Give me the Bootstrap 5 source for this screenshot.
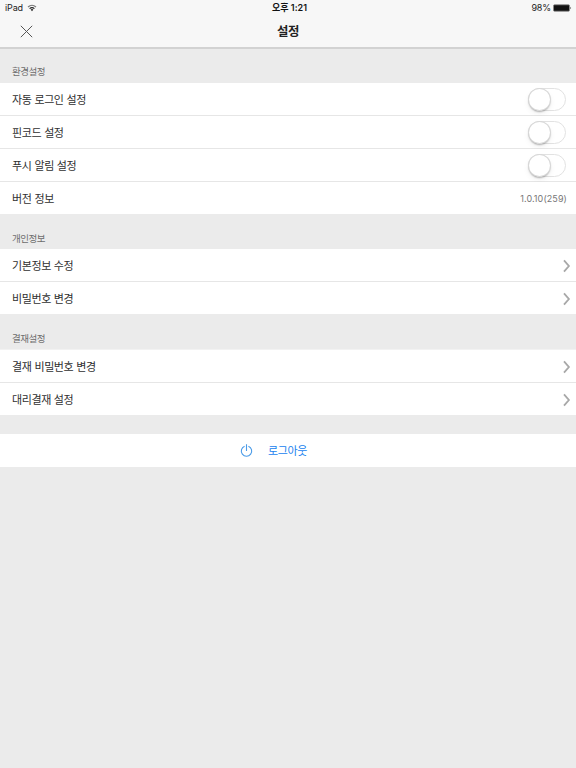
<!DOCTYPE html>
<html lang="ko">
<head>
<meta charset="utf-8">
<meta name="viewport" content="width=device-width, initial-scale=1">
<title>설정</title>
<link href="https://cdn.jsdelivr.net/npm/bootstrap@5.3.0/dist/css/bootstrap.min.css" rel="stylesheet">
<style>
body{background:#ebebeb;font-family:"Noto Sans CJK KR",sans-serif;font-size:11px;letter-spacing:-.4px;word-spacing:.3px;line-height:16px;color:#303030;min-height:100vh}
.top-area{height:49px;background:#f7f7f7;border-bottom:2px solid #d2d2d2}
.status{height:16px;padding:0 4px 0 5px;font-family:Inter,"Noto Sans CJK KR",sans-serif;font-size:9px;letter-spacing:-.15px;word-spacing:0;color:#222}
.status>div{flex:1 0 0}
.status>.clock{font-size:9px;letter-spacing:0;font-weight:600;color:#111;padding-left:2px}
.battery{margin-left:2px}
.title-row{height:31px;padding:0 20px}
.title-row>*{flex:1 0 0}
.page-title{font-size:12.4px;font-weight:700;letter-spacing:-.5px;color:#222;line-height:18px;padding-bottom:1px}
.section-name{height:35px;padding:0 12px 4px;font-size:9.5px;letter-spacing:-.45px;line-height:14px;color:#6d6d6d}
.first-name{height:34px;padding-bottom:5px}
.setting-list{--bs-list-group-border-radius:0}
.setting-list .list-group-item{height:33px;padding:0 5px 0 12px;border:0;border-bottom:1px solid #e6e6e6;color:#303030;background:#fff}
.setting-list .list-group-item:last-child{height:32px;border-bottom:0}
.approval-list{border-top:1px solid #f2f2f2}
.toggle{width:38px;height:23px;margin:1px 5px 0 0;border:1px solid #e2e2e2;border-radius:12px;background:#fff}
.toggle::before{content:"";display:block;width:21px;height:21px;border-radius:50%;background:#fff;box-shadow:0 0 0 1px #d8d8d8,0 1.5px 2px rgba(0,0,0,.45),0 3px 6px rgba(0,0,0,.08)}
.version{margin-right:4px;font-family:Inter,sans-serif;font-size:9px;letter-spacing:.1px;color:#777;padding-top:1px}
.logout{height:33px;margin-top:19px;padding-left:240px;border:0;background:#fff;color:#2183ef;letter-spacing:-.4px}
.logout span{margin-left:15px;padding-bottom:1px}
.chevron{margin-top:1px}
</style>
</head>
<body>
<header class="top-area">
  <div class="status d-flex align-items-center">
    <div class="d-flex align-items-center">
      <span>iPad</span>
      <svg class="ms-1" width="10" height="8" viewBox="0 0 10 8" fill="none" stroke="#222" stroke-width="1.2"><path d="M1 3Q5-.5 9 3" stroke="#777"/><path d="M2.6 4.6Q5 2.5 7.4 4.6"/><path d="M3.6 5.5Q5 4.6 6.4 5.5L5 7.2Z" fill="#222" stroke="none"/></svg>
    </div>
    <div class="clock text-center">오후 1:21</div>
    <div class="d-flex justify-content-end align-items-center">
      <span>98%</span>
      <svg class="battery" width="19" height="8" viewBox="0 0 19 8"><rect x=".5" y=".8" width="16" height="6.4" rx="1" fill="#111" stroke="#888" stroke-width=".8"/><path d="M17.4 2.7q1.5 1.3 0 2.6z" fill="#333"/></svg>
    </div>
  </div>
  <div class="title-row d-flex align-items-center">
    <div><button type="button" class="btn p-0 border-0 d-flex" aria-label="닫기"><svg width="13" height="13" viewBox="0 0 13 13" fill="none" stroke="#555" stroke-width="1"><path d="M.8.8 12.2 12.2M12.2.8.8 12.2"/></svg></button></div>
    <h1 class="page-title text-center m-0">설정</h1>
    <div></div>
  </div>
</header>
<main>
  <h2 class="section-name first-name d-flex align-items-end m-0 fw-normal">환경설정</h2>
  <ul class="setting-list list-group list-group-flush">
    <li class="list-group-item d-flex align-items-center justify-content-between"><span>자동 로그인 설정</span><span class="toggle" role="switch" aria-checked="false"></span></li>
    <li class="list-group-item d-flex align-items-center justify-content-between"><span>핀코드 설정</span><span class="toggle" role="switch" aria-checked="false"></span></li>
    <li class="list-group-item d-flex align-items-center justify-content-between"><span>푸시 알림 설정</span><span class="toggle" role="switch" aria-checked="false"></span></li>
    <li class="list-group-item d-flex align-items-center justify-content-between"><span>버전 정보</span><span class="version">1.0.10(259)</span></li>
  </ul>
  <h2 class="section-name d-flex align-items-end m-0 fw-normal">개인정보</h2>
  <ul class="setting-list list-group list-group-flush">
    <li class="list-group-item d-flex align-items-center justify-content-between"><span>기본정보 수정</span><svg class="chevron" width="9" height="14" viewBox="0 0 9 14" fill="none" stroke="#a8a8a8" stroke-width="1.8"><path d="M2 1.3 6.9 7 2 12.7"/></svg></li>
    <li class="list-group-item d-flex align-items-center justify-content-between"><span>비밀번호 변경</span><svg class="chevron" width="9" height="14" viewBox="0 0 9 14" fill="none" stroke="#a8a8a8" stroke-width="1.8"><path d="M2 1.3 6.9 7 2 12.7"/></svg></li>
  </ul>
  <h2 class="section-name d-flex align-items-end m-0 fw-normal">결재설정</h2>
  <ul class="setting-list approval-list list-group list-group-flush">
    <li class="list-group-item d-flex align-items-center justify-content-between"><span>결재 비밀번호 변경</span><svg class="chevron" width="9" height="14" viewBox="0 0 9 14" fill="none" stroke="#a8a8a8" stroke-width="1.8"><path d="M2 1.3 6.9 7 2 12.7"/></svg></li>
    <li class="list-group-item d-flex align-items-center justify-content-between"><span>대리결재 설정</span><svg class="chevron" width="9" height="14" viewBox="0 0 9 14" fill="none" stroke="#a8a8a8" stroke-width="1.8"><path d="M2 1.3 6.9 7 2 12.7"/></svg></li>
  </ul>
  <button type="button" class="logout w-100 d-flex align-items-center">
    <svg width="13" height="13" viewBox="0 0 13 13" fill="none" stroke="#4a9be8" stroke-width="1.1"><path d="M4.6 2.2A5.2 5.2 0 1 0 8.4 2.2M6.5.3V7"/></svg>
    <span>로그아웃</span>
  </button>
</main>
<script src="https://cdn.jsdelivr.net/npm/bootstrap@5.3.0/dist/js/bootstrap.bundle.min.js"></script>
</body>
</html>
